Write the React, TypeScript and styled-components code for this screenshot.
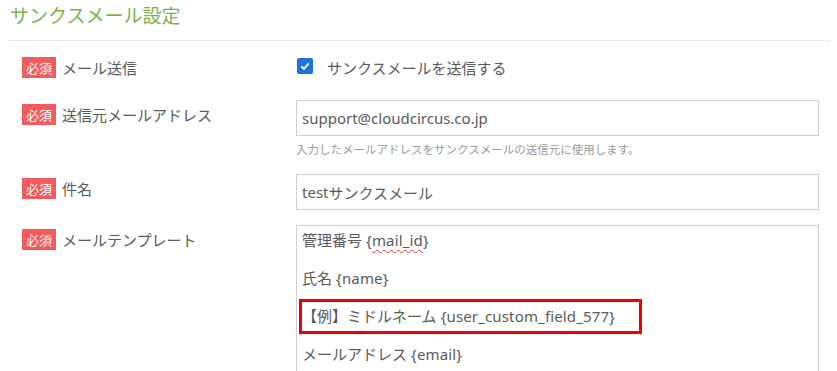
import React from "react";
import styled, { createGlobalStyle } from "styled-components";

const GlobalStyle = createGlobalStyle`
  html, body { margin: 0; padding: 0; background: #fff; }
  body {
    font-family: "Noto Sans", "Noto Sans CJK JP", sans-serif;
    color: #5a5a5a;
    overflow: hidden;
  }
`;

const Section = styled.section`
  margin: 0 7px 0 9px;
`;

const Title = styled.h2`
  margin: 0;
  padding: 2px 0 0 1px;
  font-size: 19px;
  line-height: 26px;
  font-weight: 400;
  color: #7db249;
  border-bottom: 1px dotted #d6d6d6;
  box-sizing: border-box;
  height: 41px;
`;

const Row = styled.div<{ $mt: number }>`
  display: grid;
  grid-template-columns: 287px 523px;
  align-items: start;
  margin-top: ${(p) => p.$mt}px;
`;

const LabelCell = styled.div`
  display: flex;
  align-items: center;
  gap: 6px;
  padding: 4px 0 0 13px;
`;

const Badge = styled.span`
  display: inline-flex;
  align-items: center;
  justify-content: center;
  width: 34px;
  height: 21px;
  background: #f35c5c;
  color: #fff;
  font-size: 13px;
  font-family: "Noto Sans CJK JP", sans-serif;
  line-height: 1;
`;

const LabelText = styled.span`
  font-size: 15px;
  line-height: 21px;
  color: #5a5a5a;
  font-family: "Noto Sans CJK JP", sans-serif;
`;

const CheckRow = styled.label`
  display: flex;
  align-items: center;
  height: 29px;
  padding-left: 1px;
  gap: 14px;
  font-size: 15px;
  color: #5a5a5a;
  font-family: "Noto Sans CJK JP", sans-serif;
`;

const CheckBox = styled.span`
  width: 16px;
  height: 16px;
  border-radius: 2px;
  background: #1a73e8;
  display: inline-flex;
  align-items: center;
  justify-content: center;
  margin-top: -3px;
`;

const Field = styled.div`
  height: 36px;
  border: 1px solid #cfcfcf;
  box-sizing: border-box;
  display: flex;
  align-items: center;
  padding: 0 5px;
  font-size: 15px;
  color: #5a5a5a;
`;

const Help = styled.div`
  margin-top: 6px;
  font-size: 11.5px;
  line-height: 15px;
  color: #9a9a9a;
  font-family: "Noto Sans CJK JP", sans-serif;
`;

const TextArea = styled.div`
  position: relative;
  height: 160px;
  border: 1px solid #cfcfcf;
  border-bottom: none;
  box-sizing: border-box;
  padding: 4px 5px 0;
  font-size: 15px;
  color: #5a5a5a;
  letter-spacing: 0.15px;
`;

const Line = styled.div`
  height: 38px;
  line-height: 19px;
`;

const Jp = styled.span`
  font-family: "Noto Sans CJK JP", sans-serif;
  letter-spacing: 0;
`;

const Misspelled = styled.span`
  text-decoration: underline wavy #e53935;
  text-decoration-thickness: 1px;
  text-underline-offset: 3px;
`;

const Highlight = styled.div`
  position: absolute;
  left: 2px;
  top: 73px;
  width: 343px;
  height: 35px;
  border: 3px solid #f00000;
  box-sizing: border-box;
  pointer-events: none;
`;

export default function App() {
  return (
    <>
      <GlobalStyle />
      <Section>
        <Title>
          <Jp>サンクスメール設定</Jp>
        </Title>

        <Row $mt={12}>
          <LabelCell>
            <Badge>必須</Badge>
            <LabelText>メール送信</LabelText>
          </LabelCell>
          <CheckRow>
            <CheckBox>
              <svg width="12" height="12" viewBox="0 0 12 12">
                <path d="M2.2 6.2 L4.9 8.8 L9.8 3.4" fill="none" stroke="#fff" strokeWidth="2" />
              </svg>
            </CheckBox>
            サンクスメールを送信する
          </CheckRow>
        </Row>

        <Row $mt={18}>
          <LabelCell>
            <Badge>必須</Badge>
            <LabelText>送信元メールアドレス</LabelText>
          </LabelCell>
          <div>
            <Field>support@cloudcircus.co.jp</Field>
            <Help>入力したメールアドレスをサンクスメールの送信元に使用します。</Help>
          </div>
        </Row>

        <Row $mt={17}>
          <LabelCell>
            <Badge>必須</Badge>
            <LabelText>件名</LabelText>
          </LabelCell>
          <Field>
            test<Jp>サンクスメール</Jp>
          </Field>
        </Row>

        <Row $mt={15}>
          <LabelCell>
            <Badge>必須</Badge>
            <LabelText>メールテンプレート</LabelText>
          </LabelCell>
          <TextArea>
            <Line>
              <Jp>管理番号</Jp> {"{"}
              <Misspelled>mail_id</Misspelled>
              {"}"}
            </Line>
            <Line>
              <Jp>氏名</Jp> {"{name}"}
            </Line>
            <Line>
              <Jp>【例】ミドルネーム</Jp> {"{user_custom_field_577}"}
            </Line>
            <Line>
              <Jp>メールアドレス</Jp> {"{email}"}
            </Line>
            <Highlight />
          </TextArea>
        </Row>
      </Section>
    </>
  );
}
